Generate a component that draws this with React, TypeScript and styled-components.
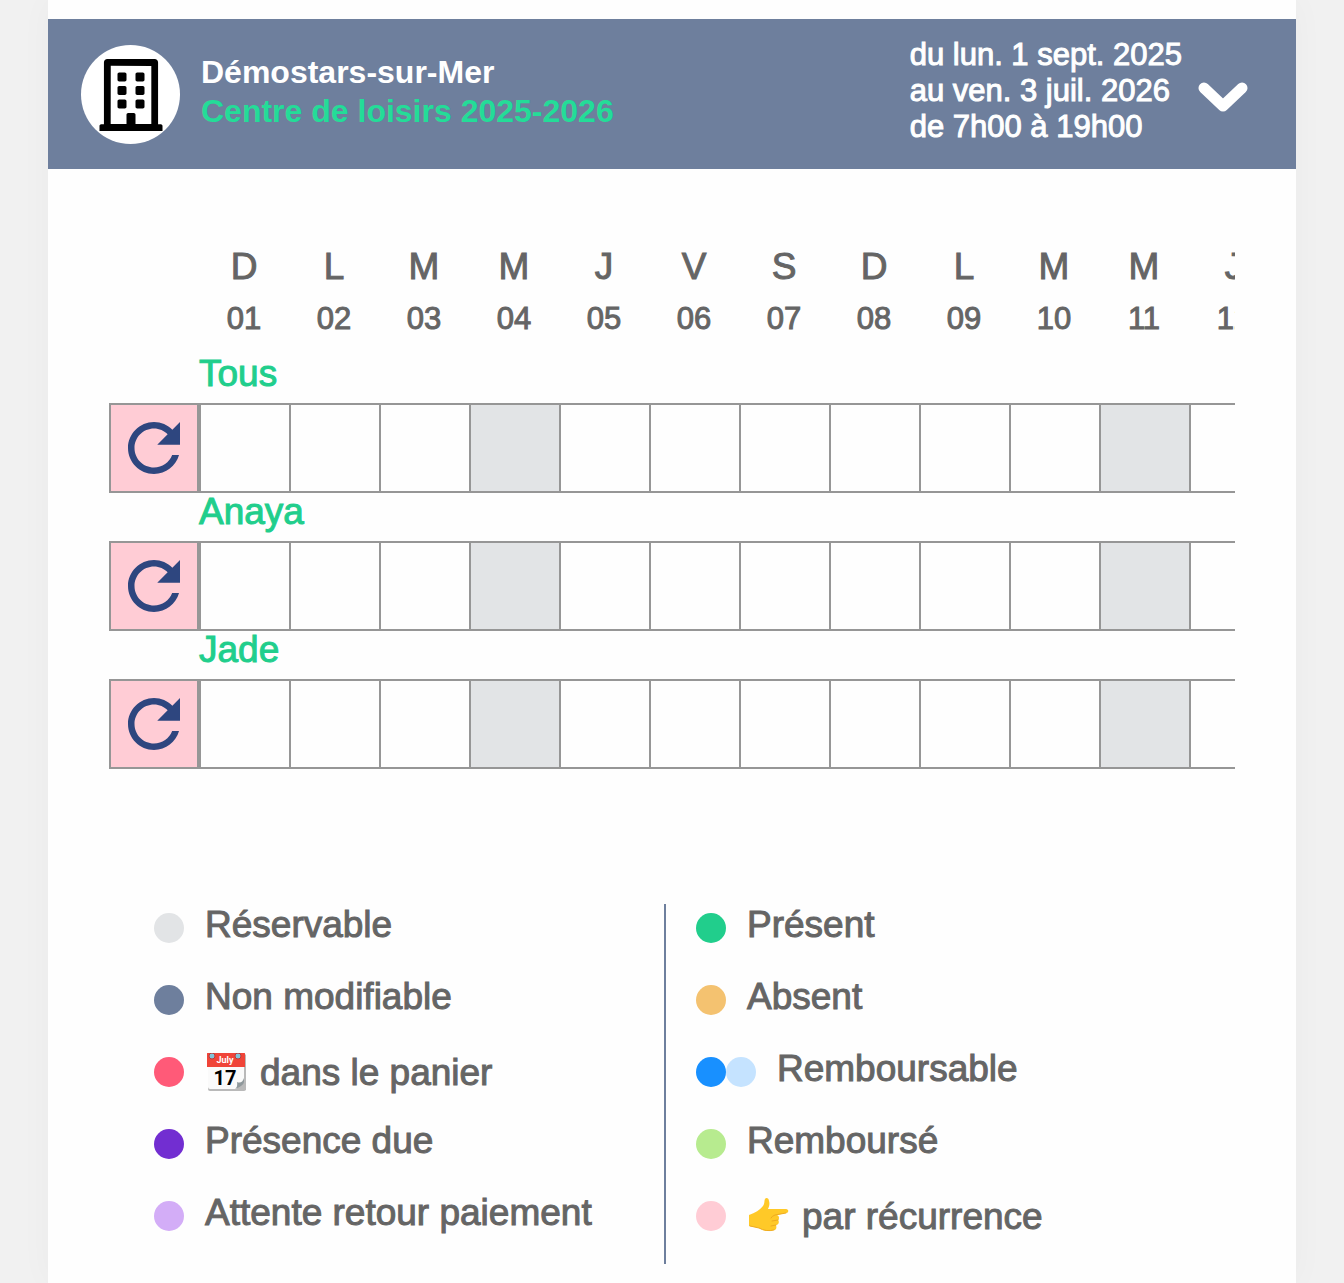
import React from "react";
import styled, { createGlobalStyle } from "styled-components";
import { FaRegBuilding } from "react-icons/fa";

const colors = {
  slate: "#6e7f9d",
  green: "#21ce8c",
  brightGreen: "#24dc98",
  text: "#656565",
  line: "#969696",
  pink: "#ffccd5",
  grey: "#e2e4e6",
  navy: "#2e467f",
};

const GlobalStyle = createGlobalStyle`
  *, *::before, *::after { box-sizing: border-box; }
  body {
    margin: 0;
    background: #f1f1f1;
    color: ${colors.text};
    font-family: "Liberation Sans", Arial, Helvetica, sans-serif;
  }
`;

const Page = styled.div`
  padding: 0 48px;
  overflow-x: hidden;
`;

const Sheet = styled.main`
  min-height: 100vh;
  padding: 19px 0;
  background: #fefefe;
  box-shadow: 0 0 32px rgba(0, 0, 0, 0.03);
`;

const Banner = styled.header`
  display: flex;
  align-items: center;
  min-height: 150px;
  padding: 0 48px 0 33px;
  background: ${colors.slate};
  color: #fff;
`;

const Avatar = styled.div`
  display: flex;
  flex: none;
  align-items: center;
  justify-content: center;
  width: 99px;
  height: 99px;
  padding-top: 1px;
  border-radius: 50%;
  background: #fff;
  color: #000;
`;

const Titles = styled.div`
  flex: 1;
  padding: 0 16px 4px 21px;
`;

const Title = styled.h1`
  margin: 0;
  font-size: 32px;
  line-height: 39px;
  font-weight: 700;
`;

const Subtitle = styled.p`
  margin: 0;
  color: ${colors.brightGreen};
  font-size: 32px;
  line-height: 39px;
  font-weight: 700;
`;

const Period = styled.p`
  margin: 0 16px 0 0;
  padding-bottom: 6px;
  font-size: 31px;
  line-height: 36px;
  -webkit-text-stroke: 1px currentColor;
`;

const Toggle = styled.button`
  display: flex;
  padding: 6px 0 0;
  border: 0;
  background: none;
  color: inherit;
  cursor: pointer;
`;

const Scroller = styled.section`
  margin: 71px 61px 0;
  overflow-x: auto;
  scrollbar-width: none;
`;

const Planning = styled.table`
  width: 1170px;
  table-layout: fixed;
  border-collapse: separate;
  border-spacing: 0;

  th,
  td {
    padding: 0;
  }
`;

const Weekday = styled.td`
  height: 52px;
  font-size: 37px;
  line-height: 54px;
  text-align: center;
  -webkit-text-stroke: 1px currentColor;
`;

const DayNumber = styled.th`
  height: 61px;
  font-size: 31px;
  line-height: 50px;
  font-weight: 400;
  text-align: center;
  vertical-align: top;
  -webkit-text-stroke: 1px currentColor;
`;

const PersonName = styled.th`
  height: 48px;
  color: ${colors.green};
  font-size: 37px;
  line-height: 38px;
  font-weight: 400;
  text-align: left;
  vertical-align: top;
  -webkit-text-stroke: 1px currentColor;
`;

const RecurrenceCell = styled.td`
  height: 90px;
  border: 2px solid ${colors.line};
  background: ${colors.pink};
`;

const RecurrenceButton = styled.button`
  display: flex;
  align-items: center;
  justify-content: center;
  width: 100%;
  height: 86px;
  padding: 0;
  border: 0;
  background: none;
  color: ${colors.navy};
  cursor: pointer;
`;

const DayCell = styled.td<{ $bookable: boolean }>`
  height: 90px;
  border: solid ${colors.line};
  border-width: 2px 0 2px 2px;
  background: ${(p) => (p.$bookable ? colors.grey : "transparent")};
`;

const Legend = styled.section`
  display: grid;
  grid-template-columns: 1fr 1fr;
  margin: 135px 88px 0 76px;
`;

const LegendColumn = styled.ul<{ $divided?: boolean }>`
  margin: 0;
  padding: 0 0 0 30px;
  list-style: none;
  border-right: ${(p) => (p.$divided ? `2px solid ${colors.slate}` : "0")};
`;

const LegendItem = styled.li`
  display: flex;
  align-items: flex-start;
  height: 72px;
`;

const Dots = styled.span`
  display: flex;
  flex: none;
  padding: 9px 21px 0 0;
`;

const Dot = styled.span<{ $color: string }>`
  width: 30px;
  height: 30px;
  border-radius: 50%;
  background: ${(p) => p.$color};
`;

const LegendLabel = styled.span<{ $withIcon?: boolean }>`
  display: flex;
  align-items: center;
  gap: 10px;
  padding-top: ${(p) => (p.$withIcon ? "4px" : "0")};
  font-size: 37px;
  line-height: 42px;
  white-space: nowrap;
  -webkit-text-stroke: 1px currentColor;

  svg {
    -webkit-text-stroke: 0;
  }
`;

const RefreshIcon = () => (
  <svg width="52" height="52" viewBox="80 80 352 352" fill="currentColor" aria-hidden="true">
    <path d="M256 388c-72.597 0-132-59.405-132-132 0-72.601 59.403-132 132-132 36.3 0 69.299 15.4 92.406 39.601L278 234h154V80l-51.698 51.702C348.406 99.798 304.406 80 256 80c-96.797 0-176 79.203-176 176s78.094 176 176 176c81.045 0 148.287-54.134 169.401-128H378.85c-18.745 49.561-67.138 84-122.85 84z" />
  </svg>
);

const ChevronIcon = () => (
  <svg width="50" height="30" viewBox="0 0 50 30" fill="none" aria-hidden="true">
    <path d="M6 6L25 24L44 6" stroke="currentColor" strokeWidth="11" strokeLinecap="round" strokeLinejoin="round" />
  </svg>
);

const CalendarIcon = () => (
  <svg width="45" height="40" viewBox="0 0 45 40" aria-hidden="true">
    <path d="M3 14h38v22a2 2 0 0 1-2 2H5a2 2 0 0 1-2-2z" fill="#b9b9b9" />
    <path d="M3 13h36v15l-8 8H5a2 2 0 0 1-2-2z" fill="#fafafa" />
    <path d="M30 36q3-2 2-7q5 2 7-4v4q0 2-3 4t-6 3z" fill="#8f989b" />
    <path d="M2 1a2 2 0 0 1 2-2h34a2 2 0 0 1 2 2v13H2z" fill="#f04438" />
    <path d="M40 1v36h1V2z" fill="#b9b9b9" />
    <circle cx="7" cy="3" r="3" fill="#82c3d8" stroke="#b93b39" />
    <circle cx="33" cy="3" r="3" fill="#82c3d8" stroke="#b93b39" />
    <text x="20" y="10" fontFamily="Roboto, sans-serif" fontSize="9" fontWeight="700" fill="#fff" textAnchor="middle">July</text>
    <text x="20" y="32" fontFamily="Roboto, sans-serif" fontSize="20" fontWeight="700" fill="#000" textAnchor="middle">17</text>
  </svg>
);

const PointingHandIcon = () => (
  <svg width="45" height="40" viewBox="0 0 45 40" aria-hidden="true">
    <path
      d="M2 18C8 16 13 13 16 9C18 6 17 4 18 2C19 0 22 1 22 4C23 7 22 10 21 12L39 12C42 12 42 16 39 16L30 18C33 19 32 23 31 23C33 25 31 28 29 28C30 31 29 33 27 33C23 35 16 34 12 31L2 29Z"
      fill="#ffc928"
    />
    <path d="M39 16L28 18q-3 1-4 3M31 23l-6 1M29 28l-5 1M3 29l9 2q7 4 15 2" fill="none" stroke="#eeab20" strokeLinecap="round" />
  </svg>
);

const weekdays = ["D", "L", "M", "M", "J", "V", "S"];
const days = Array.from({ length: 12 }, (_, i) => ({
  number: String(i + 1).padStart(2, "0"),
  weekday: weekdays[i % 7],
  bookable: i % 7 === 3,
}));
const people = ["Tous", "Anaya", "Jade"];

type Entry = { label: string; dots: string[]; icon?: React.ReactNode };

const leftEntries: Entry[] = [
  { label: "Réservable", dots: [colors.grey] },
  { label: "Non modifiable", dots: [colors.slate] },
  { label: "dans le panier", dots: ["#ff5a78"], icon: <CalendarIcon /> },
  { label: "Présence due", dots: ["#722ed1"] },
  { label: "Attente retour paiement", dots: ["#d3adf7"] },
];

const rightEntries: Entry[] = [
  { label: "Présent", dots: ["#21ce8c"] },
  { label: "Absent", dots: ["#f4c270"] },
  { label: "Remboursable", dots: ["#1890ff", "#c5e3ff"] },
  { label: "Remboursé", dots: ["#b7eb8f"] },
  { label: "par récurrence", dots: [colors.pink], icon: <PointingHandIcon /> },
];

const LegendList = ({ entries, divided }: { entries: Entry[]; divided?: boolean }) => (
  <LegendColumn $divided={divided}>
    {entries.map((entry) => (
      <LegendItem key={entry.label}>
        <Dots>
          {entry.dots.map((color) => (
            <Dot key={color} $color={color} />
          ))}
        </Dots>
        <LegendLabel $withIcon={Boolean(entry.icon)}>
          {entry.icon}
          {entry.label}
        </LegendLabel>
      </LegendItem>
    ))}
  </LegendColumn>
);

export default function App() {
  return (
    <Page>
      <GlobalStyle />
      <Sheet>
        <Banner>
          <Avatar>
            <FaRegBuilding size={72} aria-hidden="true" />
          </Avatar>
          <Titles>
            <Title>Démostars-sur-Mer</Title>
            <Subtitle>Centre de loisirs 2025-2026</Subtitle>
          </Titles>
          <Period>
            du lun. 1 sept. 2025
            <br />
            au ven. 3 juil. 2026
            <br />
            de 7h00 à 19h00
          </Period>
          <Toggle type="button" aria-label="Replier">
            <ChevronIcon />
          </Toggle>
        </Banner>

        <Scroller>
          <Planning>
            <thead>
              <tr>
                <td />
                {days.map((day) => (
                  <Weekday key={day.number}>{day.weekday}</Weekday>
                ))}
              </tr>
              <tr>
                <td />
                {days.map((day) => (
                  <DayNumber key={day.number} scope="col">
                    {day.number}
                  </DayNumber>
                ))}
              </tr>
            </thead>
            {people.map((person) => (
              <tbody key={person}>
                <tr>
                  <td />
                  <PersonName colSpan={days.length} scope="rowgroup">
                    {person}
                  </PersonName>
                </tr>
                <tr>
                  <RecurrenceCell>
                    <RecurrenceButton type="button" aria-label={`Récurrence ${person}`}>
                      <RefreshIcon />
                    </RecurrenceButton>
                  </RecurrenceCell>
                  {days.map((day) => (
                    <DayCell key={day.number} $bookable={day.bookable} />
                  ))}
                </tr>
              </tbody>
            ))}
          </Planning>
        </Scroller>

        <Legend>
          <LegendList entries={leftEntries} divided />
          <LegendList entries={rightEntries} />
        </Legend>
      </Sheet>
    </Page>
  );
}
